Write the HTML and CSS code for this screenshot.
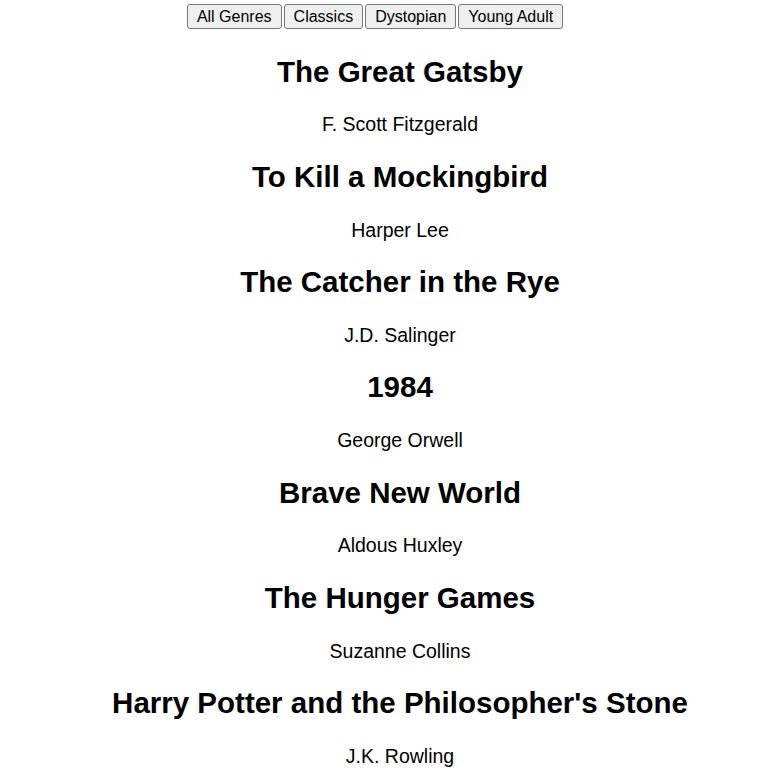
FILE: index.html
```html
<!DOCTYPE html>
<html lang="en">
<head>
<meta charset="utf-8">
<title>Books</title>
<link rel="stylesheet" href="styles.css">
</head>
<body>
<div class="filters">
  <button class="filter">All Genres</button>
  <button class="filter">Classics</button>
  <button class="filter">Dystopian</button>
  <button class="filter">Young Adult</button>
</div>
<div class="books">
  <div class="book"><h2 class="title">The Great Gatsby</h2><p class="author">F. Scott Fitzgerald</p></div>
  <div class="book"><h2 class="title">To Kill a Mockingbird</h2><p class="author">Harper Lee</p></div>
  <div class="book"><h2 class="title">The Catcher in the Rye</h2><p class="author">J.D. Salinger</p></div>
  <div class="book"><h2 class="title">1984</h2><p class="author">George Orwell</p></div>
  <div class="book"><h2 class="title">Brave New World</h2><p class="author">Aldous Huxley</p></div>
  <div class="book"><h2 class="title">The Hunger Games</h2><p class="author">Suzanne Collins</p></div>
  <div class="book"><h2 class="title">Harry Potter and the Philosopher's Stone</h2><p class="author">J.K. Rowling</p></div>
</div>
</body>
</html>
```

FILE: styles.css
```css
html, body {
  margin: 0;
  padding: 0;
  background: #ffffff;
  overflow: hidden;
}
body {
  font-family: "Liberation Sans", Arial, Helvetica, sans-serif;
  color: #000;
}
.filters {
  display: flex;
  justify-content: center;
  gap: 2px;
  padding: 4px 20px 0 0;
}
.filter {
  font-family: "Liberation Sans", Arial, Helvetica, sans-serif;
  font-size: 16px;
  line-height: 19px;
  height: 25px;
  padding: 0 9px;
  color: #000;
  background: #efefef;
  border: 1px solid #767676;
  border-radius: 3px;
}
.books {
  display: flex;
  flex-direction: column;
  padding: 25.5px 0 0 30px;
  text-align: center;
}
.book {
  display: flex;
  flex-direction: column;
  height: 105.25px;
}
.title {
  margin: 0;
  font-size: 29.5px;
  line-height: 33px;
  font-weight: bold;
}
.author {
  margin: 25.8px 0 0;
  font-size: 19.5px;
  line-height: 22px;
}
```
